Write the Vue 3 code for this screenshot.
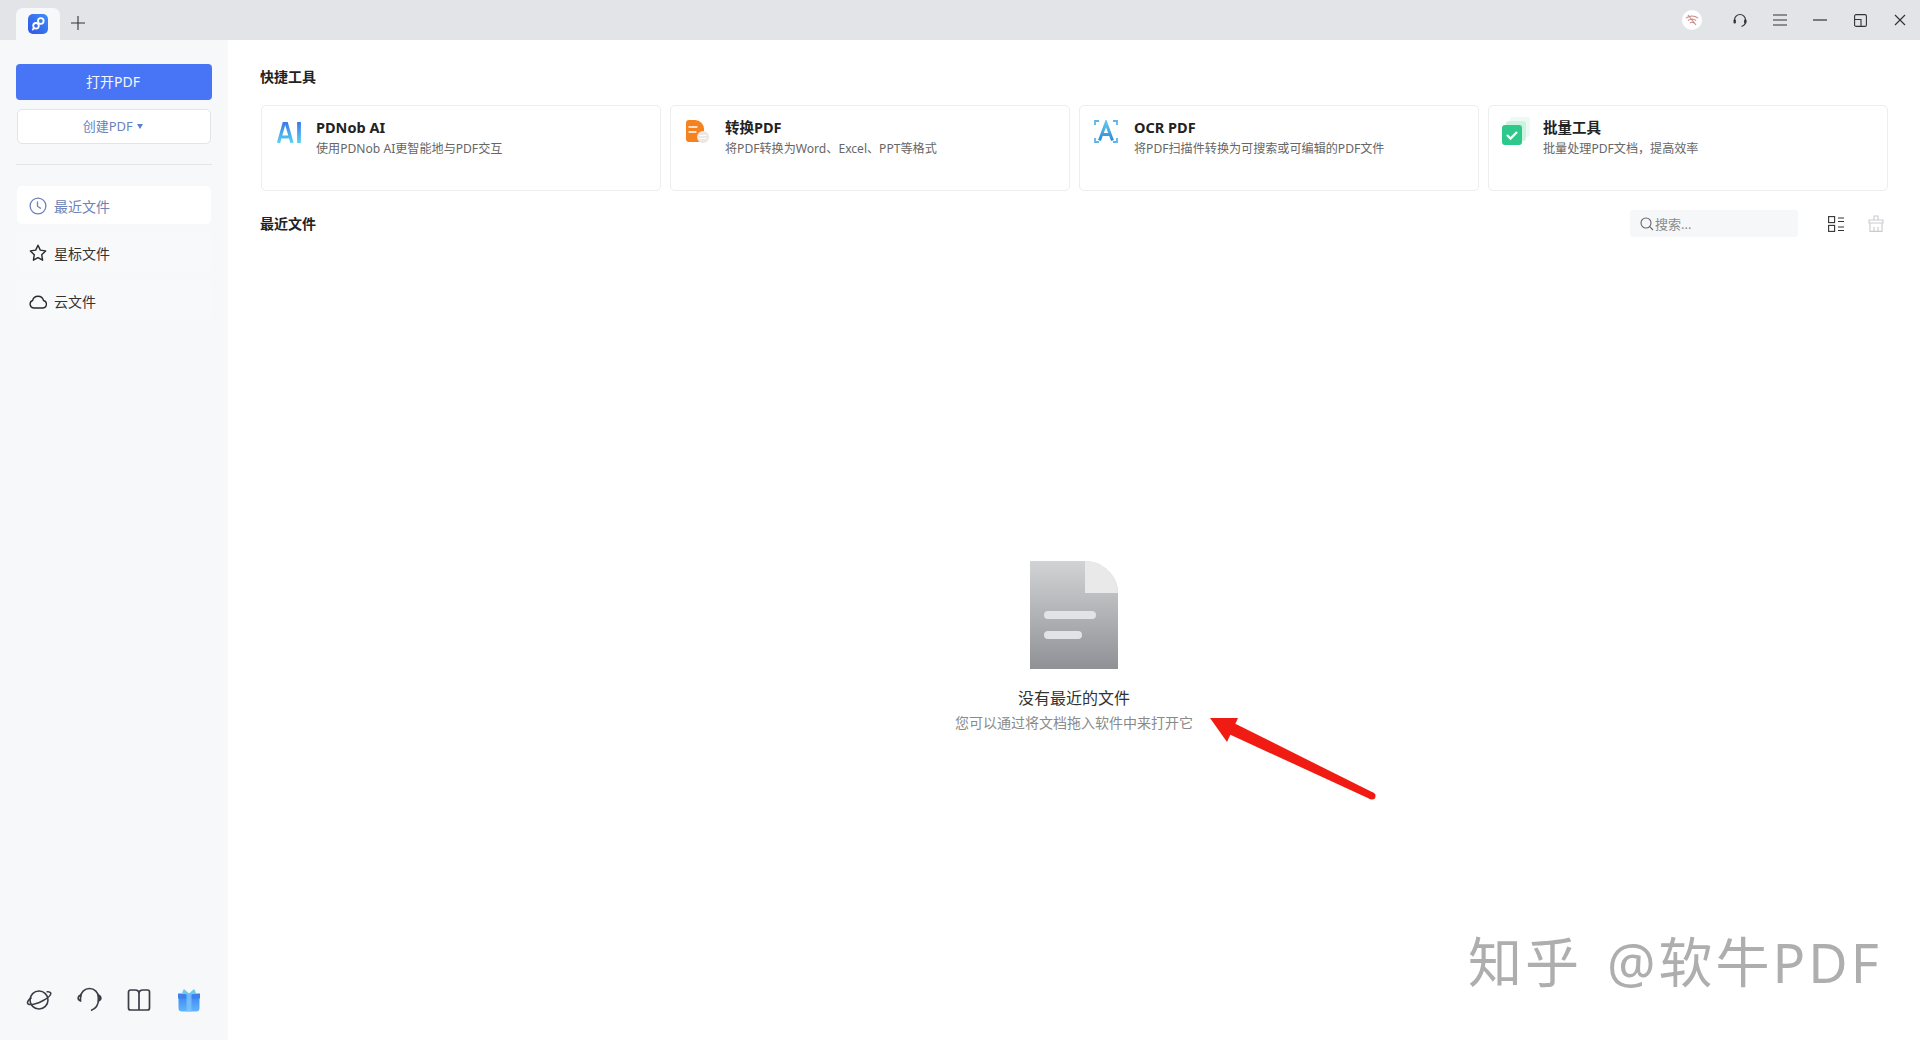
<script setup>
const tools = [
  { key: 'ai', title: 'PDNob AI', desc: '使用PDNob AI更智能地与PDF交互' },
  { key: 'conv', title: '转换PDF', desc: '将PDF转换为Word、Excel、PPT等格式' },
  { key: 'ocr', title: 'OCR PDF', desc: '将PDF扫描件转换为可搜索或可编辑的PDF文件' },
  { key: 'batch', title: '批量工具', desc: '批量处理PDF文档，提高效率' }
]
</script>

<template>
  <div class="app">
    <header class="titlebar">
      <div class="tab">
        <svg width="20" height="20" viewBox="0 0 20 20">
          <defs><linearGradient id="lg" x1="0" y1="1" x2="1" y2="0"><stop offset="0" stop-color="#2f55e6"/><stop offset="1" stop-color="#3f8ef8"/></linearGradient></defs>
          <rect width="20" height="20" rx="5" fill="url(#lg)"/>
          <g fill="none" stroke="#fff" stroke-width="1.800" stroke-linecap="round"><circle cx="12.800" cy="7" r="2.800"/><circle cx="8" cy="11.800" r="2.800"/><path d="M6 14L4.800 15.500"/></g>
        </svg>
      </div>
      <svg class="plus" width="14" height="14" viewBox="0 0 14 14"><path d="M7 0v14M0 7h14" stroke="#333" stroke-width="1.100"/></svg>
      <div class="win-icons">
        <span class="w first"><span class="wifi"><svg width="14" height="12" viewBox="0 0 14 12" fill="none" stroke="#c98a82" stroke-width="1.100"><path d="M1 4q6-4 12 0M3 6.500q4-3 8 0M5 9q2-1.500 4 0M3 1l8 10"/></svg></span></span>
        <span class="w"><svg width="16" height="16" viewBox="0 0 16 16" fill="none" stroke="#333" stroke-width="1.200"><path d="M2.500 8a5.500 5.500 0 1 1 11 0v2c0 2-1.500 3.500-4 4.500"/><rect x="1.500" y="7.500" width="2.400" height="4" rx="1" fill="#333" stroke="none"/><rect x="12.100" y="7.500" width="2.400" height="4" rx="1" fill="#333" stroke="none"/></svg></span>
        <span class="w"><svg width="14" height="12" viewBox="0 0 14 12" stroke="#333" stroke-width="1.100"><path d="M0 1h14M0 6h14M0 11h14"/></svg></span>
        <span class="w"><svg width="14" height="2" viewBox="0 0 14 2" stroke="#333" stroke-width="1.200"><path d="M0 1h14"/></svg></span>
        <span class="w"><svg width="13" height="13" viewBox="0 0 13 13" fill="none" stroke="#333" stroke-width="1.100"><rect x=".6" y=".6" width="11.800" height="11.800" rx="1.500"/><path d="M.6 5.500h6.400v7"/></svg></span>
        <span class="w"><svg width="12" height="12" viewBox="0 0 12 12" stroke="#333" stroke-width="1.200"><path d="M1 1l10 10M11 1L1 11"/></svg></span>
      </div>
    </header>

    <div class="body">
      <aside class="sidebar">
        <button class="open">打开PDF</button>
        <button class="create">创建PDF <i class="caret"></i></button>
        <div class="divider"></div>
        <nav class="nav">
          <div class="item active">
            <svg width="18" height="18" viewBox="0 0 18 18" fill="none" stroke="#6c82b8" stroke-width="1.300"><circle cx="9" cy="9" r="7.900"/><path d="M8.500 4.800V9.200l3 2" stroke-linecap="round"/></svg>
            <span>最近文件</span>
          </div>
          <div class="item">
            <svg width="18" height="18" viewBox="0 0 18 18" fill="none" stroke="#2a2a2a" stroke-width="1.400" stroke-linejoin="round"><path d="M9 1.200l2.300 4.900 5.300.8-3.900 3.800.9 5.500L9 13.600l-4.600 2.600.9-5.500L1.400 6.900l5.300-.8z"/></svg>
            <span>星标文件</span>
          </div>
          <div class="item">
            <svg width="18" height="18" viewBox="0 0 18 18" fill="none" stroke="#2a2a2a" stroke-width="1.400" stroke-linejoin="round"><path d="M4.600 16h9a3.800 3.800 0 0 0 .9-7.500 5.600 5.600 0 0 0-10.900 0A3.900 3.900 0 0 0 4.600 16z"/></svg>
            <span>云文件</span>
          </div>
        </nav>
        <div class="bottom">
          <svg width="26" height="26" viewBox="0 0 26 26" fill="none" stroke="#3a3d45" stroke-width="1.600"><circle cx="13" cy="13" r="9"/><path d="M5.500 10.500C2 13 .8 15.500 2 16.800c2.500 2 10-.3 14.800-3s8.800-6 7.800-8c-.5-1-2-1.300-4-1"/></svg>
          <svg width="26" height="26" viewBox="0 0 26 26" fill="none" stroke="#3a3d45" stroke-width="1.600"><path d="M4.500 10.500a9 9 0 1 1 18 0v2c0 5-2.500 9-7.500 11"/><path d="M4.500 8c-3.200 1.200-3.200 5 0 6z" fill="#f7f8fa"/><path d="M22.500 8c3.200 1.200 3.200 5 0 6z" fill="#3a3d45"/></svg>
          <svg width="26" height="26" viewBox="0 0 26 26" fill="none" stroke="#3a3d45" stroke-width="1.700" stroke-linejoin="round"><path d="M2.500 5a2 2 0 0 1 2-2H9c2.500 0 4 1.500 4 3.500V23H4.500a2 2 0 0 1-2-2zM23.500 5a2 2 0 0 0-2-2H17c-2.500 0-4 1.500-4 3.500V23h8.500a2 2 0 0 0 2-2z"/></svg>
          <svg class="gift" width="26" height="26" viewBox="0 0 26 26"><defs><linearGradient id="gift" x1="0" y1="0" x2="0" y2="1"><stop offset="0" stop-color="#3a84f3"/><stop offset="1" stop-color="#62b4fb"/></linearGradient></defs><path d="M2.500 8h21v13a3.500 3.500 0 0 1-3.500 3.500H6A3.500 3.500 0 0 1 2.500 21z" fill="url(#gift)"/><path d="M2 6.500h22v5H2z" fill="#3f80ef"/><path d="M10.500 6.500h5v18h-5z" fill="#7cc6fb" opacity=".8"/><path d="M13 6.500L8 2 6 5.500l4 2zM13 6.500L18 2l2 3.500-4 2z" fill="#69cbe9"/></svg>
        </div>
      </aside>

      <main class="main">
        <h2 class="heading">快捷工具</h2>
        <section class="cards">
          <div v-for="t in tools" :key="t.key" class="card">
            <div class="ticon" :class="t.key">
              <svg v-if="t.key==='ai'" width="24" height="21" viewBox="0 0 24 21" fill="none">
                <defs><linearGradient id="ai" gradientUnits="userSpaceOnUse" x1="0" y1="0" x2="0" y2="21"><stop offset="0" stop-color="#3a78e6"/><stop offset="1" stop-color="#5ad2f2"/></linearGradient></defs>
                <path d="M1.500 21L7 1.500h2.500L15 21M4 15h9" stroke="url(#ai)" stroke-width="3.200"/>
                <path d="M22 0v21" stroke="url(#ai)" stroke-width="3.800"/>
              </svg>
              <svg v-else-if="t.key==='conv'" width="24" height="23" viewBox="0 0 24 23">
                <path d="M0 3a3 3 0 0 1 3-3h6a9 9 0 0 1 9 9v11a2 2 0 0 1-2 2H3a3 3 0 0 1-3-3z" fill="#f5811f"/>
                <path d="M2.500 7h9M2.500 12h8" stroke="#fff" stroke-width="1.700"/>
                <circle cx="17" cy="17" r="6" fill="#ebe7e3"/><path d="M13.500 15.500h7M13.500 18.500h7" stroke="#fff" stroke-width="1.200"/>
              </svg>
              <svg v-else-if="t.key==='ocr'" width="24" height="23" viewBox="0 0 24 23" fill="none">
                <defs><linearGradient id="oc" gradientUnits="userSpaceOnUse" x1="0" y1="3" x2="0" y2="20"><stop offset="0" stop-color="#63c2ea"/><stop offset="1" stop-color="#2e8ed2"/></linearGradient></defs>
                <path d="M1 5V1h4M19 1h4v4M1 18v4h4M19 22h4v-4" stroke="#5fb4e8" stroke-width="1.800"/>
                <path d="M5.500 20.500L12 3l6.500 17.500M8 14.500h8" stroke="url(#oc)" stroke-width="3"/>
              </svg>
              <svg v-else width="28" height="28" viewBox="0 0 28 28">
                <rect x="8" y="0" width="20" height="20" rx="3" fill="#edfaf4"/>
                <rect x="4" y="4" width="20" height="20" rx="3" fill="#cdf2e1"/>
                <rect x="0" y="8" width="20" height="20" rx="3" fill="#2ec98a"/>
                <path d="M5 18l3.500 3.500L15 15" fill="none" stroke="#fff" stroke-width="2.300"/>
              </svg>
            </div>
            <div class="ttext">
              <div class="ttitle">{{ t.title }}</div>
              <div class="tdesc">{{ t.desc }}</div>
            </div>
          </div>
        </section>

        <section class="recent-head">
          <h2 class="heading">最近文件</h2>
          <div class="tools">
            <div class="search">
              <svg width="14" height="14" viewBox="0 0 14 14" fill="none" stroke="#666" stroke-width="1.100"><circle cx="6" cy="6" r="5"/><path d="M9.700 9.700L13 13"/></svg>
              <span>搜索...</span>
            </div>
            <svg class="view" width="16" height="16" viewBox="0 0 16 16" fill="none" stroke="#333" stroke-width="1.100"><rect x=".6" y=".6" width="6" height="6"/><rect x=".6" y="9.400" width="6" height="6"/><path d="M10 2h6M10 5.500h6M10 11h6M10 14.500h6"/></svg>
            <svg width="16" height="17" viewBox="0 0 16 17" fill="none" stroke="#c9cbd0" stroke-width="1.100"><path d="M6 5V1h4v4M1 5h14v3H1zM2 8v8.400h12V8M6 12v4M10 12v4"/></svg>
          </div>
        </section>

        <section class="empty">
          <svg width="88" height="108" viewBox="0 0 88 108">
            <defs><linearGradient id="doc" x1="0" y1="0" x2="0" y2="1"><stop offset="0" stop-color="#d2d3d5"/><stop offset="1" stop-color="#909196"/></linearGradient></defs>
            <path d="M0 0h55c18 0 33 15 33 32v76H0z" fill="url(#doc)"/>
            <path d="M55 0c18 0 33 15 33 32H55z" fill="#e9e9ea"/>
            <rect x="14" y="50" width="52" height="8" rx="4" fill="#e2e3e6"/>
            <rect x="14" y="70" width="38" height="8" rx="4" fill="#e2e3e6"/>
          </svg>
          <div class="e-title">没有最近的文件</div>
          <div class="e-sub">您可以通过将文档拖入软件中来打开它</div>
        </section>

        <svg class="arrow" width="180" height="100" viewBox="0 0 180 100">
          <path d="M22.800 11.500L17.200 22.500 166.500 91.200 169.500 84.800z" fill="#f01c14"/>
          <circle cx="168" cy="88" r="3.500" fill="#f01c14"/>
          <path d="M6 10L34 10 23 34z" fill="#f01c14"/>
        </svg>
        <div class="mark">知乎 @软牛PDF</div>
      </main>
    </div>
  </div>
</template>

<style scoped>
.app { width: 1920px; height: 1040px; display: flex; flex-direction: column; overflow: hidden; font-family: "Noto Sans", "Noto Sans CJK SC", sans-serif; color: #222; background: #fff; }
.titlebar { height: 40px; flex: none; background: #e3e4e8; display: flex; align-items: flex-end; padding-left: 16px; }
.tab { width: 44px; height: 32px; background: #f7f8fa; border-radius: 7px 7px 0 0; display: flex; align-items: center; justify-content: center; padding-top: 0; box-sizing: border-box; }
.plus { margin: 0 0 10px 11px; }
.win-icons { margin-left: auto; height: 40px; display: flex; align-items: center; }
.w { width: 40px; display: flex; justify-content: center; align-items: center; }
.w.first { margin-right: 8px; }
.wifi { width: 20px; height: 20px; border-radius: 50%; background: #fff; display: flex; align-items: center; justify-content: center; }
.body { flex: 1; display: flex; min-height: 0; }
.sidebar { width: 228px; flex: none; box-sizing: border-box; background: #f7f8fa; padding: 24px 16px 27px; display: flex; flex-direction: column; }
.open { height: 36px; border: 0; border-radius: 4px; background: #4874f6; color: #f4f6ff; font: 14px/36px "Noto Sans", "Noto Sans CJK SC", sans-serif; padding: 0 2px 0 0; }
.create { height: 35px; margin: 9px 1px 0; border: 1px solid #e2e4ea; border-radius: 5px; background: #fff; color: #6a83bc; font: 13px/33px "Noto Sans", "Noto Sans CJK SC", sans-serif; padding: 0 2px 0 0; }
.caret { display: inline-block; width: 0; height: 0; border: 3.500px solid transparent; border-top: 5px solid #5a7fd0; border-bottom: 0; vertical-align: 2px; margin-left: 1px; }
.divider { height: 1px; background: #e4e5e9; margin-top: 20px; }
.nav { margin-top: 21px; padding: 0 1px; display: flex; flex-direction: column; gap: 9px; }
.item { height: 39px; box-sizing: border-box; padding-top: 1px; border-radius: 5px; background: #f8f9fb; display: flex; align-items: center; gap: 7px; padding-left: 12px; font-size: 14px; color: #333; }
.item.active { background: #fff; color: #6c82b8; height: 38px; }
.bottom { margin-top: auto; padding-left: 10px; display: flex; gap: 24px; align-items: center; }
.gift { filter: blur(.4px); }
.main { flex: 1; position: relative; padding: 26px 32px 0 32px; box-sizing: border-box; min-width: 0; }
.heading { margin: 0; font-size: 14px; line-height: 21px; font-weight: 700; color: #222; }
.cards { display: grid; grid-template-columns: repeat(4, 400px); gap: 9px; margin: 18px 0 0 1px; }
.card { height: 86px; box-sizing: border-box; border: 1px solid #eceded; border-radius: 5px; background: #fff; display: flex; padding: 11px 0 0 14px; }
.ticon { width: 40px; flex: none; }
.ticon svg { display: block; }
.ticon.ai svg { margin: 5px 0 0 1px; }
.ticon.conv svg { margin: 3px 0 0 1px; }
.ticon.ocr svg { margin: 3px 0 0 0; }
.ticon.batch svg { margin: 0 0 0 -1px; }
.ttitle { font-size: 14.500px; font-weight: 700; line-height: 20px; color: #222; }
.tdesc { font-size: 12.100px; line-height: 18px; margin-top: 3px; color: #666; }
.recent-head { margin-top: 19px; height: 27px; display: flex; align-items: center; justify-content: space-between; }
.tools { display: flex; align-items: center; padding-right: 4px; }
.search { width: 168px; height: 27px; box-sizing: border-box; background: #f6f7f9; border-radius: 3px; display: flex; align-items: center; gap: 1px; padding-left: 10px; font-size: 13px; color: #8a8a8a; }
.view { margin: 0 24px 0 30px; }
.empty { margin-top: 324px; display: flex; flex-direction: column; align-items: center; }
.e-title { margin-top: 16.500px; font-size: 16px; line-height: 24px; color: #333; }
.e-sub { margin-top: 3.500px; font-size: 14px; line-height: 20px; color: #8a8a8a; }
.arrow { position: absolute; left: 976px; top: 668px; }
.mark { position: absolute; left: 1240px; top: 887px; font-size: 54px; line-height: 70px; letter-spacing: 3px; word-spacing: 8px; color: #aeaeae; font-weight: 400; white-space: nowrap; }
</style>

<style>
html, body { margin: 0; overflow: hidden; }
</style>
